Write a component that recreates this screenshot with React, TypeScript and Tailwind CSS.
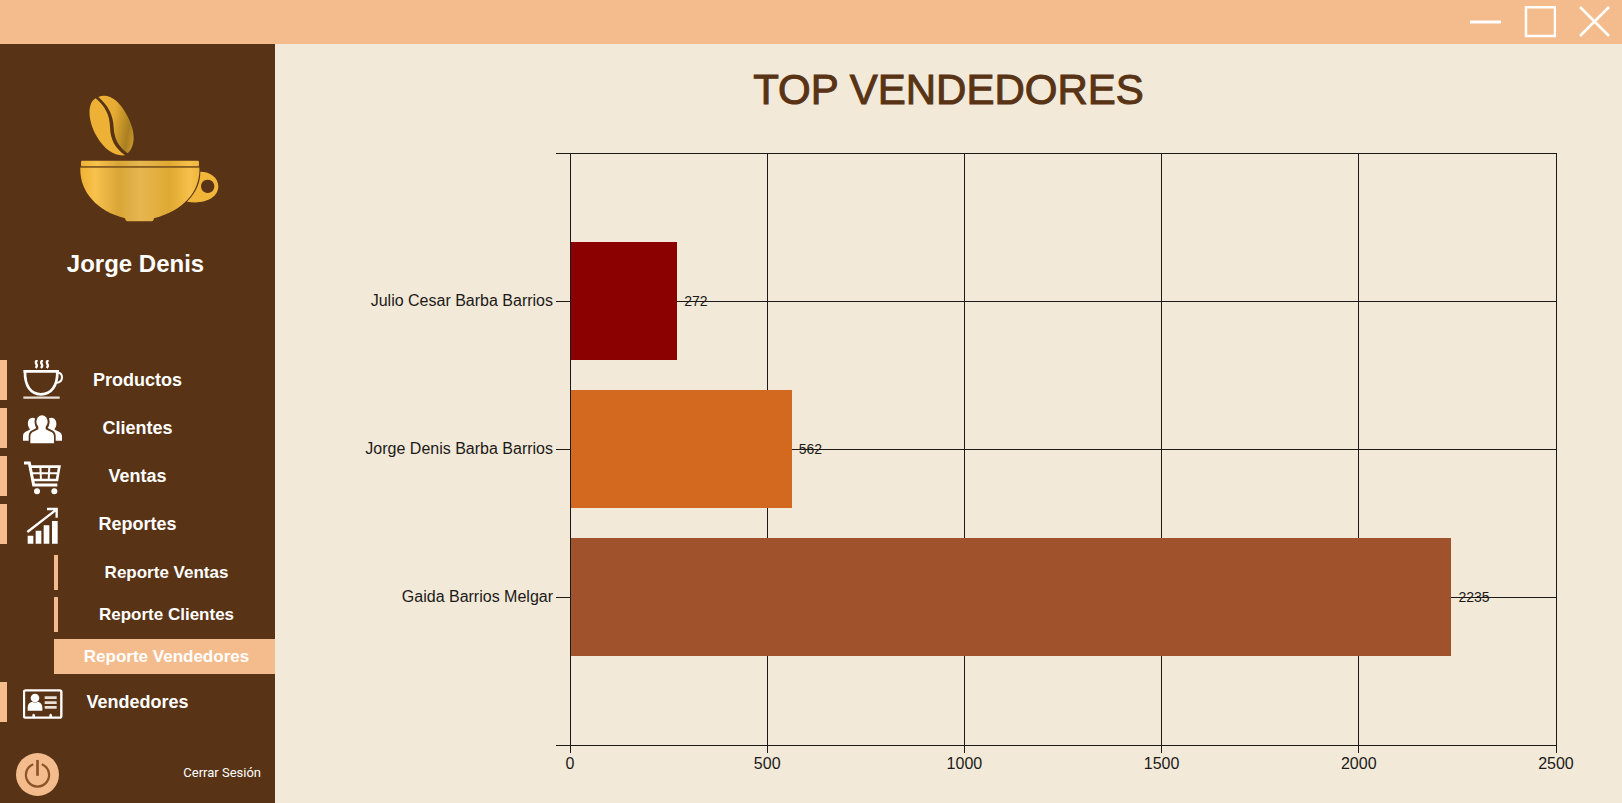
import type { ReactNode } from "react";

const AXIS_MAX = 2500;
const TICKS = [0, 500, 1000, 1500, 2000, 2500];

const SELLERS = [
  { name: "Julio Cesar Barba Barrios", total: 272, color: "bg-[#8b0000]" },
  { name: "Jorge Denis Barba Barrios", total: 562, color: "bg-[#d2691e]" },
  { name: "Gaida Barrios Melgar", total: 2235, color: "bg-[#a0522d]" },
];

function Logo() {
  return (
    <svg viewBox="240 160 420 390" className="h-[130px] w-[140px]" aria-hidden="true">
      <defs>
        <linearGradient id="bowl" x1="0" x2="1">
          <stop offset="0" stopColor="#efb233" />
          <stop offset="0.13" stopColor="#f7c24d" />
          <stop offset="0.32" stopColor="#d9a536" />
          <stop offset="0.5" stopColor="#e6b650" />
          <stop offset="0.75" stopColor="#dfa932" />
          <stop offset="0.92" stopColor="#f6c04a" />
          <stop offset="1" stopColor="#efb63c" />
        </linearGradient>
        <linearGradient id="bean" x1="0" y1="0.35" x2="1" y2="0.65">
          <stop offset="0" stopColor="#eeb136" />
          <stop offset="0.4" stopColor="#e6ab33" />
          <stop offset="0.85" stopColor="#a97f20" />
          <stop offset="1" stopColor="#c4932b" />
        </linearGradient>
      </defs>
      <path
        d="M287 176C262 190 262 240 290 290C315 333 345 350 375 347C345 325 331 300 330 262C329 225 315 200 287 176Z"
        fill="#edb135"
      />
      <path
        d="M295 172C325 160 355 180 380 225C405 270 410 315 383 341C355 322 342 295 341 262C340 225 322 195 295 172Z"
        fill="url(#bean)"
      />
      <rect x="243" y="363" width="354" height="17" rx="4" fill="url(#bowl)" />
      <rect x="241" y="380" width="357" height="4" fill="#8f641f" />
      <path
        d="M241 384H598C602 450 556 512 462 536Q461 545 455 545H381Q376 543 375 536C290 515 238 455 241 384Z"
        fill="url(#bowl)"
      />
      <path
        fillRule="evenodd"
        d="M601 396C632 396 655 415 655 440C655 475 613 495 561 486C588 458 601 430 601 396ZM623 420a20 20 0 1 0 0.1 0Z"
        fill="#f0b539"
      />
    </svg>
  );
}

function CoffeeIcon() {
  return (
    <svg viewBox="70 63 120 120" className="size-10" fill="none" stroke="#fff" strokeWidth="8" aria-hidden="true">
      <path d="M113 63q-7 6-3 12t-2 12M129 63q-7 6-3 12t-2 12M146 63q-7 6-3 12t-2 12" strokeWidth="7" />
      <path d="M71 97H178M76 97C75 141 93 166 124 166C155 166 174 141 173 97" />
      <path d="M174 101Q187 101 187 115Q187 131 169 132" strokeWidth="6" />
      <path d="M71 176H180" stroke="#e9dfd5" strokeWidth="7" />
    </svg>
  );
}

function ClientsIcon() {
  return (
    <svg viewBox="70 205 120 120" className="size-10" fill="#fff" aria-hidden="true">
      <ellipse cx="127" cy="246" rx="17" ry="19" />
      <path d="M92 311V291Q92 279 104 275L116 269V262H138V269L150 275Q163 279 163 291V311Z" />
      <path d="M106 236Q98 232 90 237Q83 243 85 256Q86 264 90 267V270L78 276Q70 279 70 288V303H87V288Q88 276 98 272L110 265Q102 252 106 236Z" />
      <path d="M148 236Q156 232 164 237Q171 243 170 256Q169 264 165 267V270L178 276Q186 279 187 288V303H168V288Q167 276 157 272L144 265Q153 252 148 236Z" />
    </svg>
  );
}

function CartIcon() {
  return (
    <svg viewBox="70 348 120 120" className="size-10" fill="none" stroke="#fff" strokeWidth="9" aria-hidden="true">
      <path d="M73 369H89L102 435H173" />
      <path d="M92 380H179L172 420H99" strokeWidth="8" />
      <path d="M96 400H176M122 380L124 420M149 380L147 420" strokeWidth="6" />
      <circle cx="112" cy="454" r="9" fill="#fff" stroke="none" />
      <circle cx="164" cy="454" r="9" fill="#fff" stroke="none" />
    </svg>
  );
}

function ReportsIcon() {
  return (
    <svg viewBox="70 490 120 120" className="size-10" fill="#fff" aria-hidden="true">
      <path d="M84 585h17v24h-17zM108 570h17v39h-17zM132 554h17v55h-17zM157 541h17v68h-17z" />
      <path d="M83 574L170 507M142 505H171V531" fill="none" stroke="#fff" strokeWidth="7" />
    </svg>
  );
}

function SellersIcon() {
  return (
    <svg viewBox="70 427 120 120" className="size-10" fill="#fff" aria-hidden="true">
      <rect x="73" y="452" width="112" height="82" rx="5" fill="none" stroke="#fff" strokeWidth="7" />
      <circle cx="106" cy="475" r="13" />
      <path d="M84 513V503Q84 490 98 486Q106 491 114 486Q128 490 128 503V513Z" />
      <path d="M135 474H171M135 489H171M135 503H171" stroke="#e9dfd5" strokeWidth="8" />
      <path d="M98 534v-8q4-8 8 0v8zM149 534v-8q4-8 8 0v8z" />
    </svg>
  );
}

function PowerIcon() {
  return (
    <svg viewBox="47 639 130 130" className="size-[43px]" fill="none" stroke="#8a5426" aria-hidden="true">
      <circle cx="112" cy="704" r="65" fill="#f4bc8d" stroke="none" />
      <path d="M99 673A35 35 0 1 0 125 673" strokeWidth="7" />
      <path d="M112 660V708" strokeWidth="8" />
    </svg>
  );
}

function NavItem({ icon, label }: { icon: ReactNode; label: string }) {
  return (
    <button
      type="button"
      className="grid h-10 w-full grid-cols-[63px_1fr_63px] items-center border-0 text-lg font-bold"
    >
      <span className="flex h-10 gap-4">
        <span className="w-[7px] bg-[#f4bc8d]" />
        {icon}
      </span>
      <span>{label}</span>
    </button>
  );
}

function SubItem({ label, active = false }: { label: string; active?: boolean }) {
  return (
    <button
      type="button"
      aria-current={active ? "page" : undefined}
      className={
        active
          ? "h-[35px] border-l-4 border-[#f4bc8d] bg-[#f4bc8d] text-[17px] font-bold"
          : "h-[35px] border-l-4 border-[#f4bc8d] text-[17px] font-bold"
      }
    >
      {label}
    </button>
  );
}

function Sidebar() {
  return (
    <aside className="flex w-[275px] shrink-0 flex-col bg-[#583315] text-white">
      <div className="flex flex-col pt-[49px]">
        <div className="pl-20">
          <Logo />
        </div>
        <p className="mt-[25px] pr-1 text-center text-2xl font-bold">Jorge Denis</p>
      </div>
      <nav className="mt-20 flex flex-col gap-2">
        <NavItem icon={<CoffeeIcon />} label="Productos" />
        <NavItem icon={<ClientsIcon />} label="Clientes" />
        <NavItem icon={<CartIcon />} label="Ventas" />
        <NavItem icon={<ReportsIcon />} label="Reportes" />
        <div className="mt-[3px] flex flex-col gap-[7px] pl-[54px]">
          <SubItem label="Reporte Ventas" />
          <SubItem label="Reporte Clientes" />
          <SubItem label="Reporte Vendedores" active />
        </div>
        <NavItem icon={<SellersIcon />} label="Vendedores" />
      </nav>
      <button
        type="button"
        className="mt-auto flex items-center justify-between pt-6 pr-[14px] pb-[7px] pl-4 font-[Roboto,sans-serif] text-[13px]"
      >
        <PowerIcon />
        <span className="pb-1">Cerrar Sesión</span>
      </button>
    </aside>
  );
}

function GridLines() {
  return (
    <svg
      className="absolute inset-0 size-full overflow-visible"
      stroke="#1c1a18"
      strokeWidth="1"
      shapeRendering="crispEdges"
      aria-hidden="true"
    >
      {TICKS.map((tick) => {
        const x = `${(tick / AXIS_MAX) * 100}%`;
        return (
          <g key={tick}>
            <line x1={x} x2={x} y1="0" y2="100%" />
            <svg x={x} y="100%" className="overflow-visible">
              <line x1="0" x2="0" y1="0" y2="8" />
            </svg>
          </g>
        );
      })}
      {["0%", "25%", "50%", "75%", "100%"].map((y) => (
        <line key={y} x1="-14" x2="100%" y1={y} y2={y} />
      ))}
    </svg>
  );
}

function SellersChart() {
  return (
    <figure className="grid flex-1 grid-cols-[295px_1fr] grid-rows-[1fr_58px] pr-[66px] text-base leading-5 text-[#1c1a18]">
      <div className="grid grid-rows-[15fr_20fr_5fr_20fr_5fr_20fr_15fr] pr-[17px]">
        {SELLERS.map((seller, i) => (
          <div
            key={seller.name}
            className="flex items-center justify-end whitespace-nowrap"
            style={{ gridRow: i * 2 + 2 }}
          >
            {seller.name}
          </div>
        ))}
      </div>
      <div className="relative">
        <GridLines />
        <div className="relative grid h-full grid-rows-[15fr_20fr_5fr_20fr_5fr_20fr_15fr]">
          {SELLERS.map((seller, i) => (
            <div key={seller.name} className="flex items-center gap-[7px]" style={{ gridRow: i * 2 + 2 }}>
              <div
                className={`h-full border-l border-[#1c1a18] ${seller.color}`}
                style={{ width: `${(seller.total / AXIS_MAX) * 100}%` }}
              />
              <span className="text-sm">{seller.total}</span>
            </div>
          ))}
        </div>
      </div>
      <div className="col-start-2 flex justify-between pt-[9px]">
        {TICKS.map((tick) => (
          <span key={tick} className="flex w-0 justify-center">
            <span>{tick}</span>
          </span>
        ))}
      </div>
    </figure>
  );
}

function TitleBar() {
  return (
    <header className="flex h-11 items-center justify-end gap-[23px] bg-[#f4bc8d] pr-[11px]">
      <button type="button" aria-label="Minimizar">
        <svg viewBox="0 0 32 32" className="size-8" stroke="#fff" strokeWidth="3">
          <path d="M1 16H32" />
        </svg>
      </button>
      <button type="button" aria-label="Maximizar">
        <svg viewBox="0 0 32 32" className="size-8" fill="none" stroke="#fff" strokeWidth="2.5">
          <path d="M2 1.3H31V30H2Z" />
        </svg>
      </button>
      <button type="button" aria-label="Cerrar">
        <svg viewBox="0 0 32 32" className="size-8" stroke="#fff" strokeWidth="2.5">
          <path d="M1 1L30 30M30 1L1 30" />
        </svg>
      </button>
    </header>
  );
}

export default function App() {
  return (
    <div className="flex min-h-screen flex-col bg-[#f2e9d8] font-['Liberation_Sans',Arial,sans-serif]">
      <TitleBar />
      <div className="flex flex-1">
        <Sidebar />
        <main className="flex min-w-0 flex-1 flex-col">
          <h1 className="mt-6 mb-[41px] text-center text-[42px] leading-[44px] text-[#583315] [-webkit-text-stroke:1px_#583315]">
            TOP VENDEDORES
          </h1>
          <SellersChart />
        </main>
      </div>
    </div>
  );
}
